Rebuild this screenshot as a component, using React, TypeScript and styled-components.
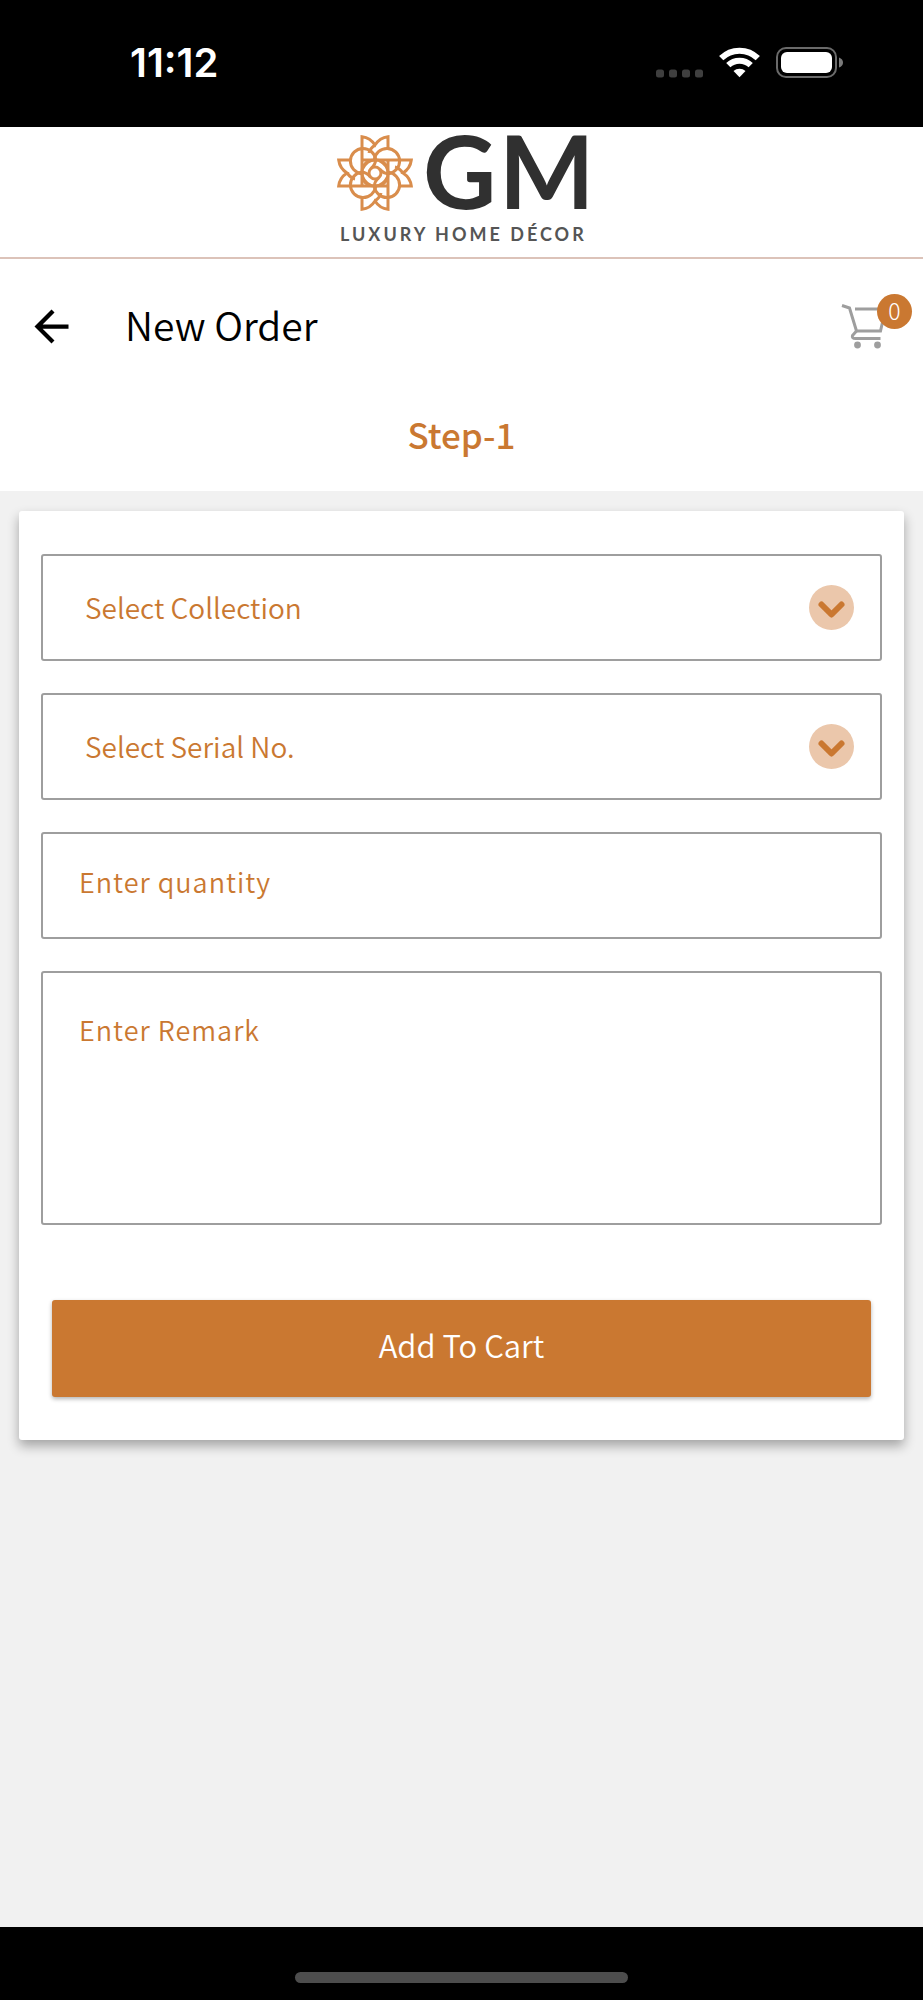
import React from 'react';
import styled, { createGlobalStyle } from 'styled-components';

const accent = '#ca7831';
const sans = '"Noto Sans CJK SC", "Noto Sans", sans-serif';

const GlobalStyle = createGlobalStyle`
  *, *::before, *::after { box-sizing: border-box; }
  body { margin: 0; background: #f1f1f1; font-family: ${sans}; }
`;

const Screen = styled.div`
  min-height: 100vh;
  display: flex;
  flex-direction: column;
`;

const StatusBar = styled.div`
  height: 127px;
  padding: 0 80px 3px 130px;
  display: flex;
  align-items: center;
  justify-content: space-between;
  background: #000;
  color: #fff;
`;

const Clock = styled.time`
  padding-top: 2px;
  font: 600 40px/48px Inter, sans-serif;
`;

const StatusIcons = styled.div`
  display: flex;
  align-items: flex-end;
  gap: 16px;
`;

const Brand = styled.header`
  height: 132px;
  display: flex;
  justify-content: center;
  background: #fff;
  border-bottom: 2px solid #dcc3b9;
`;

const NavBar = styled.nav`
  height: 135px;
  padding: 0 10px 0 26px;
  display: flex;
  align-items: center;
  background: #fff;
`;

const IconButton = styled.button`
  display: flex;
  padding: 0;
  border: 0;
  background: none;
  cursor: pointer;
`;

const Title = styled.h1`
  flex: 1;
  margin: 0 0 0 48px;
  padding-bottom: 6px;
  font-size: 39px;
  font-weight: 350;
  line-height: 56px;
  color: #000;
`;

const CartButton = styled(IconButton)`
  position: relative;
  width: 72px;
  height: 72px;
  padding-top: 11px;
`;

const Badge = styled.span`
  position: absolute;
  top: 3px;
  right: 1px;
  width: 35px;
  height: 35px;
  border-radius: 50%;
  background: ${accent};
  color: #fff;
  font: 300 23px/33px ${sans};
  text-align: center;
`;

const StepHeading = styled.h2`
  height: 97px;
  margin: 0;
  background: #fff;
  color: ${accent};
  font-size: 35px;
  font-weight: 500;
  line-height: 80px;
  text-align: center;
`;

const Main = styled.main`
  flex: 1;
  padding: 20px 19px;
  background: #f1f1f1;
`;

const Card = styled.form`
  padding: 43px 22px 43px;
  display: flex;
  flex-direction: column;
  gap: 32px;
  background: #fff;
  border-radius: 3px;
  box-shadow: 0 6px 12px rgba(0, 0, 0, 0.32);
`;

const SelectWrap = styled.div`
  position: relative;
  display: flex;
`;

const fieldStyle = `
  display: block;
  width: 100%;
  margin: 0;
  border: 2px solid #9e9e9e;
  border-radius: 3px;
  outline: none;
  background: #fff;
  color: ${accent};
  font-family: ${sans};
  font-weight: 350;
  &::placeholder { color: ${accent}; opacity: 1; }
`;

const Select = styled.select`
  ${fieldStyle}
  height: 107px;
  padding: 0 88px 2px 42px;
  font-size: 28px;
  appearance: none;
`;

const Chevron = styled.svg`
  position: absolute;
  top: 31px;
  right: 28px;
  pointer-events: none;
`;

const Input = styled.input`
  ${fieldStyle}
  height: 107px;
  padding: 0 36px 8px;
  font-size: 27px;
  letter-spacing: 1px;
`;

const TextArea = styled.textarea`
  ${fieldStyle}
  height: 254px;
  padding: 36px;
  font-size: 27px;
  line-height: 42px;
  letter-spacing: 1px;
  resize: none;
`;

const SubmitButton = styled.button`
  height: 97px;
  margin: 43px 11px 0;
  padding: 0 0 8px;
  border: 0;
  border-radius: 3px;
  background: ${accent};
  box-shadow: 0 2px 4px rgba(0, 0, 0, 0.3);
  color: #fff;
  font: 350 31px/46px ${sans};
`;

const HomeBar = styled.footer`
  height: 73px;
  padding-top: 45px;
  background: #000;
`;

const HomeIndicator = styled.div`
  width: 36%;
  height: 11px;
  margin: 0 auto;
  border-radius: 6px;
  background: #4d4d4d;
`;

const SignalDots = () => (
  <svg width="47" height="31" viewBox="0 0 47 31" fill="#3f3f3f" aria-hidden="true">
    {[0, 13, 26, 39].map((x) => (
      <rect key={x} x={x} y="22.5" width="8" height="8" rx="2.5" />
    ))}
  </svg>
);

const Wifi = () => (
  <svg width="41" height="31" viewBox="0 0 41 31" aria-hidden="true">
    <g fill="none" stroke="#fff" strokeWidth="6">
      <path d="M2.2 11.2a26 26 0 0 1 36.6 0" />
      <path d="M9.3 18.2a16 16 0 0 1 22.4 0" />
    </g>
    <path d="M20.5 30.3l-6-6.2a8.6 8.6 0 0 1 12 0z" fill="#fff" />
  </svg>
);

const Battery = () => (
  <svg width="67" height="31" viewBox="0 0 67 31" aria-hidden="true">
    <rect x="1" y="1" width="59" height="29" rx="9" fill="none" stroke="#6a6a6a" strokeWidth="2" />
    <rect x="5" y="5" width="51" height="21" rx="6" fill="#fff" />
    <path d="M63 10.5q4 1.500 4 5t-4 5z" fill="#7a7a7a" />
  </svg>
);

const Logo = () => (
  <svg width="250" height="130" viewBox="0 0 250 130" overflow="visible" role="img" aria-label="GM Luxury Home Décor">
    <g transform="translate(38 46) scale(.333)" fill="none" stroke="#d98d4c" strokeWidth="9">
      {[0, 90, 180, 270].map((r) => (
        <g key={r} transform={`rotate(${r})`}>
          <path d="M-39 -72V-109Q-14 -106 0 -84Q14 -106 39 -109V-72" />
          <path d="M0 -84Q-16 -72 -18 -60" />
          <path d="M-39 2A38 38 0 1 1 2 -39Q2 -26 -12 -14" />
          <path d="M-39 -72V0Q-39 24 -12 38M-36 -39H4Q24 -39 36 -20" />
        </g>
      ))}
      <circle r="18" />
    </g>
    <g fontFamily="Lato, sans-serif" fontWeight="700" fill="#303030">
      <text x="86 162" y="82" fontSize="101">GM</text>
      <text x="3" y="114" fontSize="18" letterSpacing="3" fill="#555">LUXURY HOME DÉCOR</text>
    </g>
  </svg>
);

const BackArrow = () => (
  <svg width="51" height="51" viewBox="0 0 24 24" aria-hidden="true">
    <path d="M20 11H7.830l5.590-5.590L12 4l-8 8 8 8 1.410-1.410L7.830 13H20v-2z" />
  </svg>
);

const Cart = () => (
  <svg width="44" height="48" viewBox="0 0 44 48" fill="none" stroke="#9e9e9e" strokeWidth="3" aria-hidden="true">
    <path d="M1 3.500l7.500 2.500 7 23h24l5-22H14" />
    <path d="M15.500 29l-4 4.500q-1 3 3 3h25" />
    <circle cx="16.500" cy="43" r="3.400" fill="#9e9e9e" stroke="none" />
    <circle cx="36.500" cy="43" r="3.400" fill="#9e9e9e" stroke="none" />
  </svg>
);

const SelectField = ({ label }: { label: string }) => (
  <SelectWrap>
    <Select aria-label={label} defaultValue="">
      <option value="">{label}</option>
    </Select>
    <Chevron width="45" height="45" viewBox="0 0 45 45" aria-hidden="true">
      <circle cx="22.500" cy="22.500" r="22.500" fill="#ebc7ab" />
      <path d="M12.500 19.500l10 10 10-10" fill="none" stroke={accent} strokeWidth="6" strokeLinecap="round" strokeLinejoin="round" />
    </Chevron>
  </SelectWrap>
);

export default function App() {
  return (
    <Screen>
      <GlobalStyle />
      <StatusBar>
        <Clock>11:12</Clock>
        <StatusIcons>
          <SignalDots />
          <Wifi />
          <Battery />
        </StatusIcons>
      </StatusBar>
      <Brand>
        <Logo />
      </Brand>
      <NavBar>
        <IconButton type="button" aria-label="Back">
          <BackArrow />
        </IconButton>
        <Title>New Order</Title>
        <CartButton type="button" aria-label="Cart">
          <Cart />
          <Badge>0</Badge>
        </CartButton>
      </NavBar>
      <StepHeading>Step-1</StepHeading>
      <Main>
        <Card onSubmit={(e: React.FormEvent) => e.preventDefault()}>
          <SelectField label="Select Collection" />
          <SelectField label="Select Serial No." />
          <Input aria-label="Enter quantity" placeholder="Enter quantity" inputMode="numeric" />
          <TextArea aria-label="Enter Remark" placeholder="Enter Remark" />
          <SubmitButton type="submit">Add To Cart</SubmitButton>
        </Card>
      </Main>
      <HomeBar>
        <HomeIndicator />
      </HomeBar>
    </Screen>
  );
}
